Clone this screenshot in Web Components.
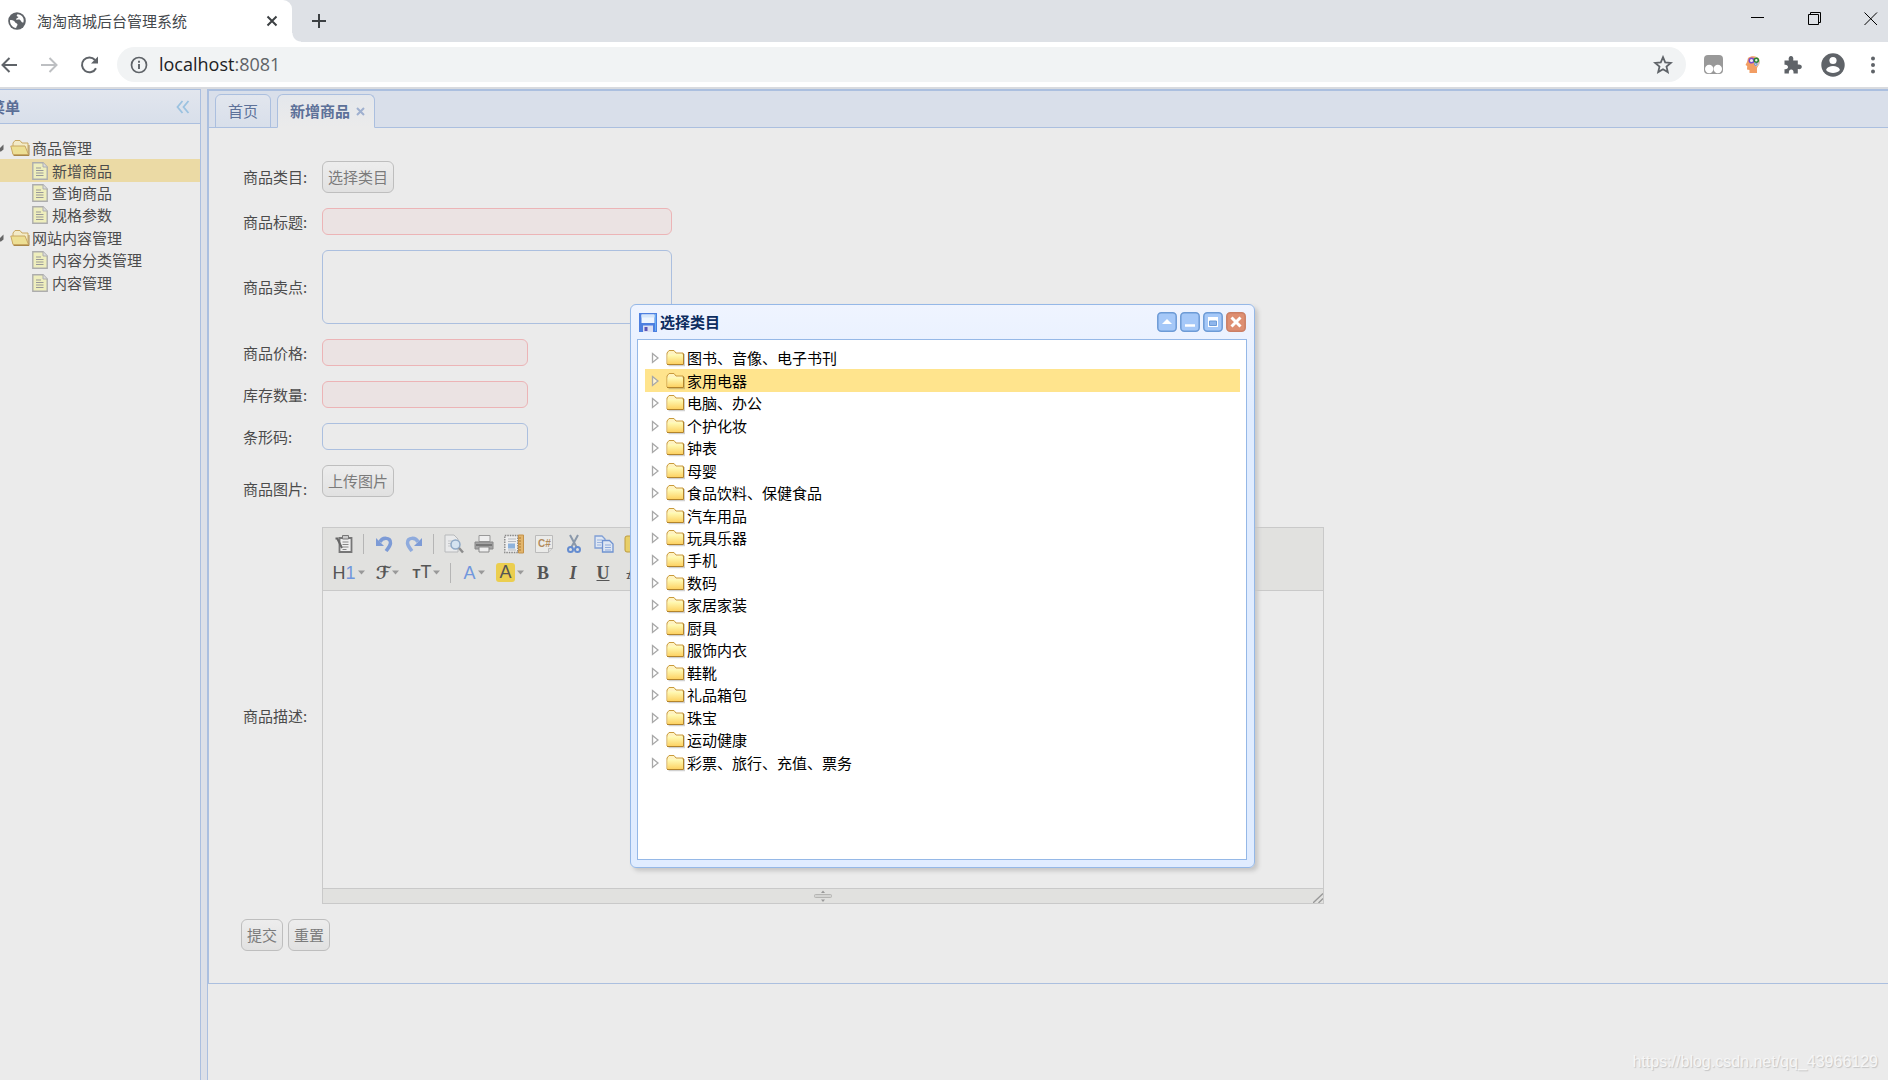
<!DOCTYPE html>
<html lang="zh-CN">
<head>
<meta charset="utf-8">
<title>淘淘商城后台管理系统</title>
<style>
  html, body { height: 100%; margin: 0; }
  body { font: 15px/22px "Noto Sans CJK SC", sans-serif; color: #4c4c4c; background: #ebebeb; overflow: hidden; }
</style>
</head>
<body>
<admin-app></admin-app>
<script>
const define = (name, html, setup, base = HTMLElement) => {
  const template = document.createElement('template');
  template.innerHTML = html;
  customElements.define(name, class extends base {
    static formAssociated = name === 'rich-editor';
    constructor() {
      super();
      this.attachShadow({ mode: 'open', delegatesFocus: name === 'rich-editor' });
    }
    connectedCallback() {
      if (this.shadowRoot.childNodes.length) return;
      this.shadowRoot.append(template.content.cloneNode(true));
      if (setup) setup(this, this.shadowRoot);
    }
  });
};

/* ---------- browser frame ---------- */
define('browser-frame', `
<style>
  :host { display: block; flex: none; background: #fff; border-bottom: 2px solid #d9dbdf; }
  * { box-sizing: border-box; }
  button { border: 0; background: none; padding: 0; display: flex; align-items: center; justify-content: center; flex: none; }
  svg { display: block; flex: none; }
  .strip { display: flex; height: 42px; background: #dee1e6; }
  .tab { display: flex; align-items: center; width: 292px; background: #fff; border-radius: 0 9px 0 0; padding: 0 12px 0 8px; color: #45494d; }
  .tab span { flex: 1; padding-left: 11px; line-height: 22px; }
  .corner { width: 9px; height: 9px; align-self: flex-end; background: radial-gradient(circle at 100% 0, transparent 8px, #fff 9px); }
  .new { width: 36px; height: 42px; }
  .win { margin-left: auto; display: flex; height: 37px; }
  .win button { width: 57px; }
  .win button:last-child { width: 45px; justify-content: flex-end; padding-right: 10px; }
  .bar { display: flex; align-items: center; height: 45px; }
  .nav { width: 40px; height: 35px; }
  .nav:first-child { width: 29px; justify-content: flex-start; }
  .omni { flex: 1; height: 35px; margin-left: 8px; border-radius: 18px; background: #f1f3f4; display: flex; align-items: center; padding: 0 13px 0 13px; }
  .url { flex: 1; font: 18px/24px "Open Sans", sans-serif; color: #5f6368; padding: 0 0 2px 11px; }
  .url b { font-weight: 400; color: #202124; }
  .ext { display: flex; align-items: center; }
  .ext button { width: 54px; }
  .ext button:nth-child(even) { width: 26px; }
  .ext button:last-child { width: 42px; padding-left: 12px; }
</style>
<div class="strip">
  <div class="tab">
    <svg width="18" height="18" viewBox="0 0 18 18"><circle cx="9" cy="9" r="8.8" fill="#5f6368"/><path d="M2 8.2c2.6-.4 4.500 .8 5.300 2.200.4.9 2 .6 2.200 2 .1 1.300-1 1.600-1.400 3.500C4.600 15.600 1.800 12.300 2 8.200zM9.500 2.200C8 3.700 8.700 4.600 10.300 4.700c.3 1.200-2.100 1.100-2.200 2.700 1 .9 2.600-.4 4 .5 1.500 1 .8 2.300 3.300 2.500C16.800 6 13.700 2.200 9.500 2.200z" fill="#fff"/></svg>
    <span>淘淘商城后台管理系统</span>
    <button aria-label="关闭标签页"><svg width="16" height="16"><path d="M3.500 3.500l9 9m0-9l-9 9" stroke="#3c4043" stroke-width="2"/></svg></button>
  </div>
  <div class="corner"></div>
  <button class="new" aria-label="新标签页"><svg width="16" height="16"><path d="M8 1v14M1 8h14" stroke="#3c4043" stroke-width="2"/></svg></button>
  <div class="win">
    <button aria-label="最小化"><svg width="14" height="14"><path d="M0 5.500h13" stroke="#000"/></svg></button>
    <button aria-label="还原"><svg width="14" height="14" fill="none" stroke="#000"><path d="M.5 2.500h10v10H.5zM2.500 2.500v-2h10v10h-2"/></svg></button>
    <button aria-label="关闭"><svg width="14" height="14"><path d="M.5 .5l12.500 12.500m0-12.500L.5 13" stroke="#000"/></svg></button>
  </div>
</div>
<div class="bar">
  <button class="nav" aria-label="后退"><svg width="18" height="18" fill="none" stroke="#5f6368" stroke-width="2"><path d="M17 9H3M9.500 2L2.500 9l7 7"/></svg></button>
  <button class="nav" aria-label="前进"><svg width="18" height="18" fill="none" stroke="#bdbfc2" stroke-width="2"><path d="M1 9h15M9.500 2l7 7-7 7"/></svg></button>
  <button class="nav" aria-label="刷新"><svg width="20" height="20"><path d="M17 13.200A7.400 7.400 0 1 1 16 5" fill="none" stroke="#5f6368" stroke-width="2"/><path d="M19 1.500v7h-7z" fill="#5f6368"/></svg></button>
  <div class="omni">
    <svg width="18" height="18"><circle cx="9" cy="9" r="7.500" fill="none" stroke="#5f6368" stroke-width="1.700"/><path d="M9 8v5M9 4.800v2" stroke="#5f6368" stroke-width="1.900"/></svg>
    <div class="url" role="textbox" aria-label="地址" tabindex="0"><b>localhost</b>:8081</div>
    <button aria-label="收藏"><svg width="20" height="20"><path d="M10 2.200l2.200 5.200 5.600.5-4.300 3.700 1.300 5.500L10 14.200l-4.800 2.900 1.300-5.500-4.300-3.700 5.600-.5z" fill="none" stroke="#5f6368" stroke-width="1.800"/></svg></button>
  </div>
  <div class="ext">
    <button aria-label="扩展一"><svg width="19" height="19"><rect width="19" height="19" rx="4" fill="#999"/><circle cx="5.200" cy="14" r="4.200" fill="#fff"/><circle cx="13.800" cy="14" r="4.200" fill="#fff"/></svg></button>
    <button aria-label="扩展二"><svg width="16" height="20"><path d="M3 3C6 .5 12 .5 14 4c2 3.500-1 7-2 9v5H4.500v-3L2 14.500 2.200 11 .5 10 2 7z" fill="#f29d63"/><path d="M10 2c4 0 6 4 4 8l-3 2-2-4z" fill="#d9c5bd"/><circle cx="6.500" cy="5.500" r="2.300" fill="#eee" stroke="#7a4bd0" stroke-width="1.500"/><circle cx="11.300" cy="5.200" r="2" fill="#eee" stroke="#25832e" stroke-width="1.500"/><circle cx="10.800" cy="9.200" r="1.200" fill="#eee" stroke="#5b83c9"/></svg></button>
    <button aria-label="扩展程序"><svg width="20" height="20"><path d="M1.500 5.500h4.300C5.200 2.600 6.300 1 8 1s2.800 1.600 2.200 4.500h4.600V9.600c2.500-.5 4 .5 4 2.200s-1.500 2.700-4 2.200v4.500H10.500c.4-2.600-.7-3.900-2.300-3.900s-2.700 1.300-2.300 3.900H1.500v-4.300c2.300.3 3.500-.7 3.500-2.200s-1.200-2.600-3.500-2.300z" fill="#5f6368"/></svg></button>
    <button aria-label="用户"><svg width="24" height="24"><circle cx="12" cy="12" r="11.700" fill="#5f6368"/><circle cx="12" cy="7.500" r="3.600" fill="#fff"/><path d="M5 17c1-3 4-4 7-4s6 1 7 4c-2 2.300-4.500 3-7 3s-5-.7-7-3z" fill="#fff"/></svg></button>
    <button aria-label="更多"><svg width="6" height="18" fill="#5f6368"><circle cx="3" cy="2.500" r="2"/><circle cx="3" cy="9" r="2"/><circle cx="3" cy="15.500" r="2"/></svg></button>
  </div>
</div>`);

/* ---------- tree ---------- */
const folderSvg = `<svg width="20" height="18" viewBox="0 0 20 18"><defs><linearGradient id="g" x2="0" y2="1"><stop offset="0" stop-color="#fffcb8"/><stop offset="1" stop-color="#fdd263"/></linearGradient></defs><path d="M3.500 16.500h16V5" fill="none" stroke="#000" stroke-opacity=".18" stroke-width="1.500"/><path d="M2 15V4L4 1.500h5L11 4H18V15z" fill="#fff3c0" stroke="#c99a3c"/><path d="M2.500 5.500h15.500v9.500H2.500z" fill="url(#g)"/><path d="M2 15.500h16.500V4.500" fill="none" stroke="#b3842b"/></svg>`;
const openSvg = `<svg width="20" height="18" viewBox="0 0 20 18"><path d="M3 15V4l2-2.500h5L12 4h6v11z" fill="#f3ebc8" stroke="#c9a863"/><path d="M3 15.500L.8 7H15l3.500 8.500z" fill="#eddf94" stroke="#c9a863"/><path d="M3.500 16.500H19V6" fill="none" stroke="#a88748"/></svg>`;
const fileSvg = `<svg width="16" height="18" viewBox="0 0 16 18"><path d="M.8 .8H11l4.200 4.200v12.200H.8z" fill="#eeeebd" stroke="#adadad" stroke-width="1.400"/><path d="M11 .8V5h4.200" fill="#ddd" stroke="#adadad"/><path d="M4 6h5M4 8.500h7.500M4 11h7.500M4 13.500h7.500" stroke="#999"/></svg>`;
const closedArrow = `<svg width="8" height="12"><path d="M1.500 1.500L7 6l-5.500 4.500z" fill="#fff" fill-opacity=".6" stroke="#a8a8a8" stroke-width="1.300"/></svg>`;
const openArrow = `<svg width="8" height="8"><path d="M7.500 .5v5L5 7.500H.5z" fill="#666"/></svg>`;

define('tree-node', `
<style>
  :host { display: flex; align-items: center; min-height: 0; }
  :host([selected]) { background: var(--tree-selected); }
  i { display: flex; align-items: center; justify-content: center; width: 20px; flex: none; }
  :host([kind=file]) .arrow { width: 40px; }
  i svg { display: block; }
  .text { padding-left: 2px; line-height: 22px; white-space: nowrap; }
</style>
<i class="arrow"></i><i class="icon"></i><span class="text"><slot></slot></span>`, (host, root) => {
  const kind = host.getAttribute('kind');
  host.setAttribute('role', 'treeitem');
  root.querySelector('.arrow').innerHTML = kind === 'closed' ? closedArrow : kind === 'open' ? openArrow : '';
  root.querySelector('.icon').innerHTML = kind === 'closed' ? folderSvg : kind === 'open' ? openSvg : fileSvg;
});

define('tree-view', `
<style>:host { display: grid; grid-auto-rows: 1fr; }</style><slot></slot>`,
  host => host.setAttribute('role', 'tree'));

/* ---------- side menu ---------- */
define('side-menu', `
<style>
  :host { display: block; flex: none; width: 200px; border-top: 1px solid #abbfdf; border-right: 1px solid #abbfdf; overflow: hidden; --tree-selected: #ebdaa5; }
  header { display: flex; align-items: center; justify-content: space-between; height: 33px; border-bottom: 1px solid #abbfdf; background: linear-gradient(#e2e6ee, #d8dfea); padding-right: 10px; }
  h2 { margin: 0 0 0 -10px; font-size: 15px; line-height: 22px; color: #5b6f97; }
  button { border: 0; padding: 0; background: none; display: flex; }
  tree-view { height: 157px; margin: 13px 0 0 -10px; }
</style>
<header><h2>菜单</h2><button aria-label="折叠菜单"><svg width="14" height="14" fill="none" stroke="#9bc2e0" stroke-width="1.800"><path d="M6.500 1L1.500 7l5 6M12.500 1L7.500 7l5 6"/></svg></button></header>
<tree-view>
  <tree-node kind="open">商品管理</tree-node>
  <tree-node kind="file" selected>新增商品</tree-node>
  <tree-node kind="file">查询商品</tree-node>
  <tree-node kind="file">规格参数</tree-node>
  <tree-node kind="open">网站内容管理</tree-node>
  <tree-node kind="file">内容分类管理</tree-node>
  <tree-node kind="file">内容管理</tree-node>
</tree-view>`);

/* ---------- tabs ---------- */
define('tab-panel', `
<style>
  :host { display: block; border: 1px solid #abbfdf; border-right: 0; }
  .tabs { display: flex; gap: 6px; box-sizing: border-box; height: 37px; padding: 3px 0 0 6px; background: #d9dfea; box-shadow: inset 0 -1px #abbfdf; }
  button { font: inherit; line-height: 22px; color: #5d7199; border: 1px solid #abbfdf; border-radius: 6px 6px 0 0; background: linear-gradient(#e2e6ee, #d8dfea); padding: 0 12px; display: flex; align-items: center; gap: 6px; }
  button[aria-selected=true] { font-weight: 700; background: linear-gradient(#e4e7ec, #ebebeb); border-bottom-color: #ebebeb; padding-right: 9px; }
</style>
<div class="tabs" role="tablist">
  <button role="tab">首页</button>
  <button role="tab" aria-selected="true">新增商品<svg width="9" height="9"><path d="M1 1l7 7m0-7L1 8" stroke="#9fb0cf" stroke-width="2"/></svg></button>
</div>
<slot></slot>`);

/* ---------- rich editor ---------- */
const icons = {
  source: '<path d="M5.500 4h12v14h-12z" fill="#eee" stroke="#777" stroke-width="1.800"/><path d="M8.500 1.500h6v3.500h-6z" fill="#ccc" stroke="#777"/><path d="M8.500 8h6M8.500 10.500h6M8.500 13h6M8.500 15.500h4" stroke="#888"/><path d="M1.500 4.500h3M3 4l5 10" stroke="#666" stroke-width="2"/>',
  undo: '<path d="M2 4v8h8z" fill="#7d9bd6"/><path d="M6 8C8 3 17 3 16.500 9c-.2 3-2 5-4.500 8" fill="none" stroke="#7d9bd6" stroke-width="3.500"/>',
  redo: '<path d="M18 4v8h-8z" fill="#7d9bd6"/><path d="M14 8C12 3 3 3 3.500 9c.2 3 2 5 4.500 8" fill="none" stroke="#8fabdd" stroke-width="3.500"/>',
  preview: '<path d="M1 1h9l4 4v13H1z" fill="#e9eaeb" stroke="#b7b9bb"/><path d="M4 7h6M4 9.500h4M4 12h4" stroke="#c5c7ca"/><circle cx="11.500" cy="10.500" r="4.500" fill="#d5e3f0" stroke="#8fa9c6" stroke-width="1.500"/><path d="M15 14l4 4.500" stroke="#8d8d8d" stroke-width="2.500"/>',
  print: '<path d="M5 1.500h11v6H5z" fill="#eee" stroke="#999"/><path d="M1 8h18v7H1z" fill="#a4a4a4" stroke="#888"/><path d="M2 11h16" stroke="#777" stroke-width="2"/><path d="M5 13h10v5H5z" fill="#eee" stroke="#888"/>',
  template: '<path d="M.8 1.500h13v17H.8z" fill="#eee" stroke="#888" stroke-width="1.400" stroke-dasharray="1.500 1"/><path d="M4 5h8M4 7.500h8M4 16h8" stroke="#b5b9bf"/><path d="M4 9.500h7v5H4z" fill="#8db2dc"/><path d="M14.500 1h5v18h-5z" fill="#e2b56c" stroke="#c4924a"/><path d="M15 4h2M15 7h2M15 10h2M15 13h2M15 16h2" stroke="#a87633"/>',
  code: '<path d="M1.500 1.500h17v13l-4 4h-13z" fill="#ebebe9" stroke="#bbb"/><path d="M18.500 14.500h-4v4" fill="#ddd" stroke="#bbb"/><text x="4" y="13" font-family="Liberation Sans" font-size="10" font-weight="700" fill="#b28b5d">C#</text>',
  cut: '<path d="M6 1l6.500 12M14 1L7.500 13" stroke="#8a98aa" stroke-width="2"/><circle cx="6.500" cy="15.500" r="2.500" fill="none" stroke="#648cd0" stroke-width="2"/><circle cx="13.500" cy="15.500" r="2.500" fill="none" stroke="#648cd0" stroke-width="2"/>',
  copy: '<path d="M1 2h7l3 3v9H1z" fill="#dfe7f3" stroke="#809fd5" stroke-width="1.300"/><path d="M3 6h5M3 8.500h5M3 11h4" stroke="#9ab3dd"/><path d="M8.500 6.500h7l3.500 3.500v8H8.500z" fill="#dfe7f3" stroke="#6f92d0" stroke-width="1.300"/><path d="M11 11h6M11 13.500h6M11 16h6" stroke="#8fabdc"/>',
  paste: '<rect x="1" y="2" width="15" height="16" rx="2" fill="#e8cf68" stroke="#bd9b3e"/><path d="M8 8h11v11H8z" fill="#e8edf5" stroke="#8fa9d6"/>'
};
define('tool-button', `
<style>
  :host { display: block; width: 30px; }
  :host([wide]) { width: 39px; }
  :host([colour]) { width: 36px; }
  button { width: 100%; height: 29px; border: 0; padding: 0; background: none; color: #555; display: flex; align-items: center; justify-content: center; gap: 2px; font: 18px/22px "Liberation Sans", sans-serif; }
  svg { display: block; flex: none; }
</style>
<button><slot></slot></button>`, (host, root) => {
  const button = root.querySelector('button');
  const name = host.getAttribute('icon');
  button.setAttribute('aria-label', host.getAttribute('label'));
  if (name) button.innerHTML = `<svg width="20" height="20">${icons[name]}</svg>`;
  if (host.hasAttribute('wide') || host.hasAttribute('colour'))
    button.insertAdjacentHTML('beforeend', '<svg width="7" height="5"><path d="M0 .5h7L3.500 4.500z" fill="#999"/></svg>');
});
define('rich-editor', `
<style>
  :host { display: flex; flex-direction: column; box-sizing: border-box; max-width: 1002px; height: 377px; border: 1px solid #c9c9c9; }
  .tools { background: #e1e1df; border-bottom: 1px solid #c9c9c9; padding: 1px 6px 3px; }
  .row { display: flex; align-items: center; }
  hr { width: 1px; height: 20px; margin: 0 5px 0 4px; border: 0; background: #b5b5b5; }
  textarea { flex: 1; border: 0; padding: 5px; margin: 0; resize: none; background: #ebebeb; outline: 0; }
  footer { height: 14px; border-top: 1px solid #c9c9c9; background: #e1e1df; display: grid; grid-template-columns: 1fr auto 1fr; align-items: center; }
  footer svg { display: block; }
  footer svg:last-child { justify-self: end; align-self: end; }
  b, em, u, s { font-family: "Liberation Serif", serif; font-weight: 700; line-height: 22px; }
  .f { font-family: "DejaVu Sans", sans-serif; font-weight: 700; }
  .blue { color: #7197dd; }
  small { font-size: 13px; font-weight: 700; }
  .mark { display: block; background: #ebce4f; border-radius: 3px; width: 19px; line-height: 19px; text-align: center; }
</style>
<div class="tools">
  <div class="row">
    <tool-button icon="source" label="源代码"></tool-button><hr>
    <tool-button icon="undo" label="后退"></tool-button><tool-button icon="redo" label="前进"></tool-button><hr>
    <tool-button icon="preview" label="预览"></tool-button><tool-button icon="print" label="打印"></tool-button><tool-button icon="template" label="模板"></tool-button><tool-button icon="code" label="代码"></tool-button><tool-button icon="cut" label="剪切"></tool-button><tool-button icon="copy" label="复制"></tool-button><tool-button icon="paste" label="粘贴"></tool-button>
  </div>
  <div class="row">
    <tool-button wide label="段落"><span>H<span class="blue">1</span></span></tool-button><tool-button wide label="字体"><span class="f">ℱ</span></tool-button><tool-button wide label="文字大小"><span><small>T</small>T</span></tool-button><hr>
    <tool-button colour label="文字颜色"><span class="blue">A</span></tool-button><tool-button colour label="文字背景"><span class="mark">A</span></tool-button>
    <tool-button label="粗体"><b>B</b></tool-button><tool-button label="斜体"><em>I</em></tool-button><tool-button label="下划线"><u>U</u></tool-button><tool-button label="删除线"><s>A</s></tool-button>
  </div>
</div>
<textarea aria-label="商品描述"></textarea>
<footer><span></span><svg width="18" height="13"><rect x=".5" y="4.500" width="17" height="3" rx="1" fill="#d4d4d2" stroke="#b5b5b3"/><path d="M7 3l2-2.500L11 3zM7 9.500h4L9 12z" fill="#999"/></svg><svg width="10" height="10"><path d="M0 10L10 .5M5.500 10L10 5.500" stroke="#999" stroke-width="1.300"/></svg></footer>`);

/* ---------- product form ---------- */
define('product-form', `
<style>
  :host { display: block; padding: 33px 34px 32px; }
  * { box-sizing: border-box; }
  form { display: grid; grid-template-columns: 79px minmax(0, 1fr); row-gap: 15px; align-items: center; }
  label { line-height: 22px; }
  button { font: inherit; color: #7b7b7b; height: 32px; padding: 0 5px; border: 1px solid #bebebe; border-radius: 6px; background: linear-gradient(#ededed, #e1e1e1); justify-self: start; }
  input, textarea { display: block; height: 27px; width: 206px; margin: 0; border: 1px solid #abbfdf; border-radius: 6px; background: #ebebeb; padding: 4px; font: inherit; resize: none; outline: 0; }
  input[required] { border-color: #ecb4b6; background: #ebe3e3; }
  .wide { width: 350px; }
  textarea { height: 74px; }
  .upload { height: 47px; }
  .actions { grid-column: 1 / -1; display: flex; gap: 5px; margin-left: -2px; }
</style>
<form>
  <label for="cat">商品类目:</label><button type="button" id="cat">选择类目</button>
  <label for="title">商品标题:</label><input id="title" class="wide" required>
  <label for="point">商品卖点:</label><textarea id="point" class="wide"></textarea>
  <label for="price">商品价格:</label><input id="price" required>
  <label for="stock">库存数量:</label><input id="stock" required>
  <label for="code">条形码:</label><input id="code">
  <label for="pic">商品图片:</label><div class="upload"><button type="button" id="pic">上传图片</button></div>
  <label for="desc">商品描述:</label><rich-editor id="desc"></rich-editor>
  <div class="actions"><button type="button">提交</button><button type="reset">重置</button></div>
</form>`);

/* ---------- category dialog ---------- */
define('category-dialog', `
<style>
  :host { position: absolute; left: 630px; top: 304px; width: 625px; height: 564px; box-sizing: border-box; display: flex; flex-direction: column; padding: 0 7px 7px 6px; border: 1px solid #95b8e7; border-radius: 6px; background: linear-gradient(#eff4ff, #e0ecff 20%); box-shadow: 3px 3px 4px #c6c6c6; color: #000; --tree-selected: #ffe48d; }
  header { display: flex; align-items: center; height: 34px; gap: 3px; padding: 0 1px 0 2px; }
  h2 { flex: 1; margin: 0; font-size: 15px; line-height: 22px; color: #0e2d5f; }
  header svg { display: block; flex: none; }
  button { border: 0; padding: 0; background: none; }
  .body { flex: 1; border: 1px solid #95b8e7; background: #fff; padding: 7px 6px 7px 7px; }
  tree-view { height: 427px; }
</style>
<header>
  <svg width="18" height="19"><path d="M0 0h18v19H0z" fill="#4d7fe0"/><path d="M2.500 1.500h13v8.500h-13z" fill="#eef5ff"/><path d="M2.500 1.500h13v3h-13z" fill="#d5e6fb"/><path d="M4 12.500h10V19H4z" fill="#dcdff2"/><path d="M5.500 14h3v4h-3z" fill="#5b54b5"/><path d="M16.500 1v17" stroke="#66b1f5"/></svg>
  <h2>选择类目</h2>
  <button aria-label="折叠"><svg width="20" height="20"><rect x=".8" y=".8" width="18.400" height="18.400" rx="3.500" fill="#a5c8f8" stroke="#6d9bd6" stroke-width="1.500"/><path d="M5 12l5-5 5 5z" fill="#fff"/></svg></button>
  <button aria-label="最小化"><svg width="20" height="20"><rect x=".8" y=".8" width="18.400" height="18.400" rx="3.500" fill="#a5c8f8" stroke="#6d9bd6" stroke-width="1.500"/><path d="M5 13.500h10" stroke="#fff" stroke-width="2.500"/></svg></button>
  <button aria-label="最大化"><svg width="20" height="20"><rect x=".8" y=".8" width="18.400" height="18.400" rx="3.500" fill="#a5c8f8" stroke="#6d9bd6" stroke-width="1.500"/><path d="M5 5h10v10H5z" fill="#fff"/><path d="M6.500 9h7v4.500h-7z" fill="#8fb6ec" stroke="#6d9bd6"/></svg></button>
  <button aria-label="关闭"><svg width="20" height="20"><rect x=".8" y=".8" width="18.400" height="18.400" rx="3.500" fill="#de8f72" stroke="#cb7f65" stroke-width="1.500"/><path d="M5.500 5.500l9 9m0-9l-9 9" stroke="#fff" stroke-width="3"/></svg></button>
</header>
<div class="body"><tree-view></tree-view></div>`, (host, root) => {
  host.setAttribute('role', 'dialog');
  host.setAttribute('aria-label', '选择类目');
  const names = ['图书、音像、电子书刊', '家用电器', '电脑、办公', '个护化妆', '钟表', '母婴', '食品饮料、保健食品', '汽车用品', '玩具乐器', '手机', '数码', '家居家装', '厨具', '服饰内衣', '鞋靴', '礼品箱包', '珠宝', '运动健康', '彩票、旅行、充值、票务'];
  const tree = root.querySelector('tree-view');
  names.forEach((name, i) => {
    const node = document.createElement('tree-node');
    node.setAttribute('kind', 'closed');
    if (i === 1) node.setAttribute('selected', '');
    node.textContent = name;
    tree.append(node);
  });
});

/* ---------- application ---------- */
define('admin-app', `
<style>
  :host { display: flex; flex-direction: column; height: 100vh; }
  .layout { flex: 1; display: flex; min-height: 0; background: #dde0e7; gap: 6px; }
  side-menu { background: #ebebeb; }
  main { flex: 1; min-width: 0; border-left: 1px solid #abbfdf; border-top: 1px solid #abbfdf; background: #ebebeb; }
  .mark { position: absolute; right: 10px; bottom: 8px; font: 16px/20px "Liberation Sans", sans-serif; color: #f6f6f6; text-shadow: 1px 1px 1px #c4c4c4; }
</style>
<browser-frame></browser-frame>
<div class="layout">
  <side-menu></side-menu>
  <main><tab-panel><product-form></product-form></tab-panel></main>
</div>
<category-dialog></category-dialog>
<span class="mark">https://blog.csdn.net/qq_43966129</span>`);
</script>
</body>
</html>
